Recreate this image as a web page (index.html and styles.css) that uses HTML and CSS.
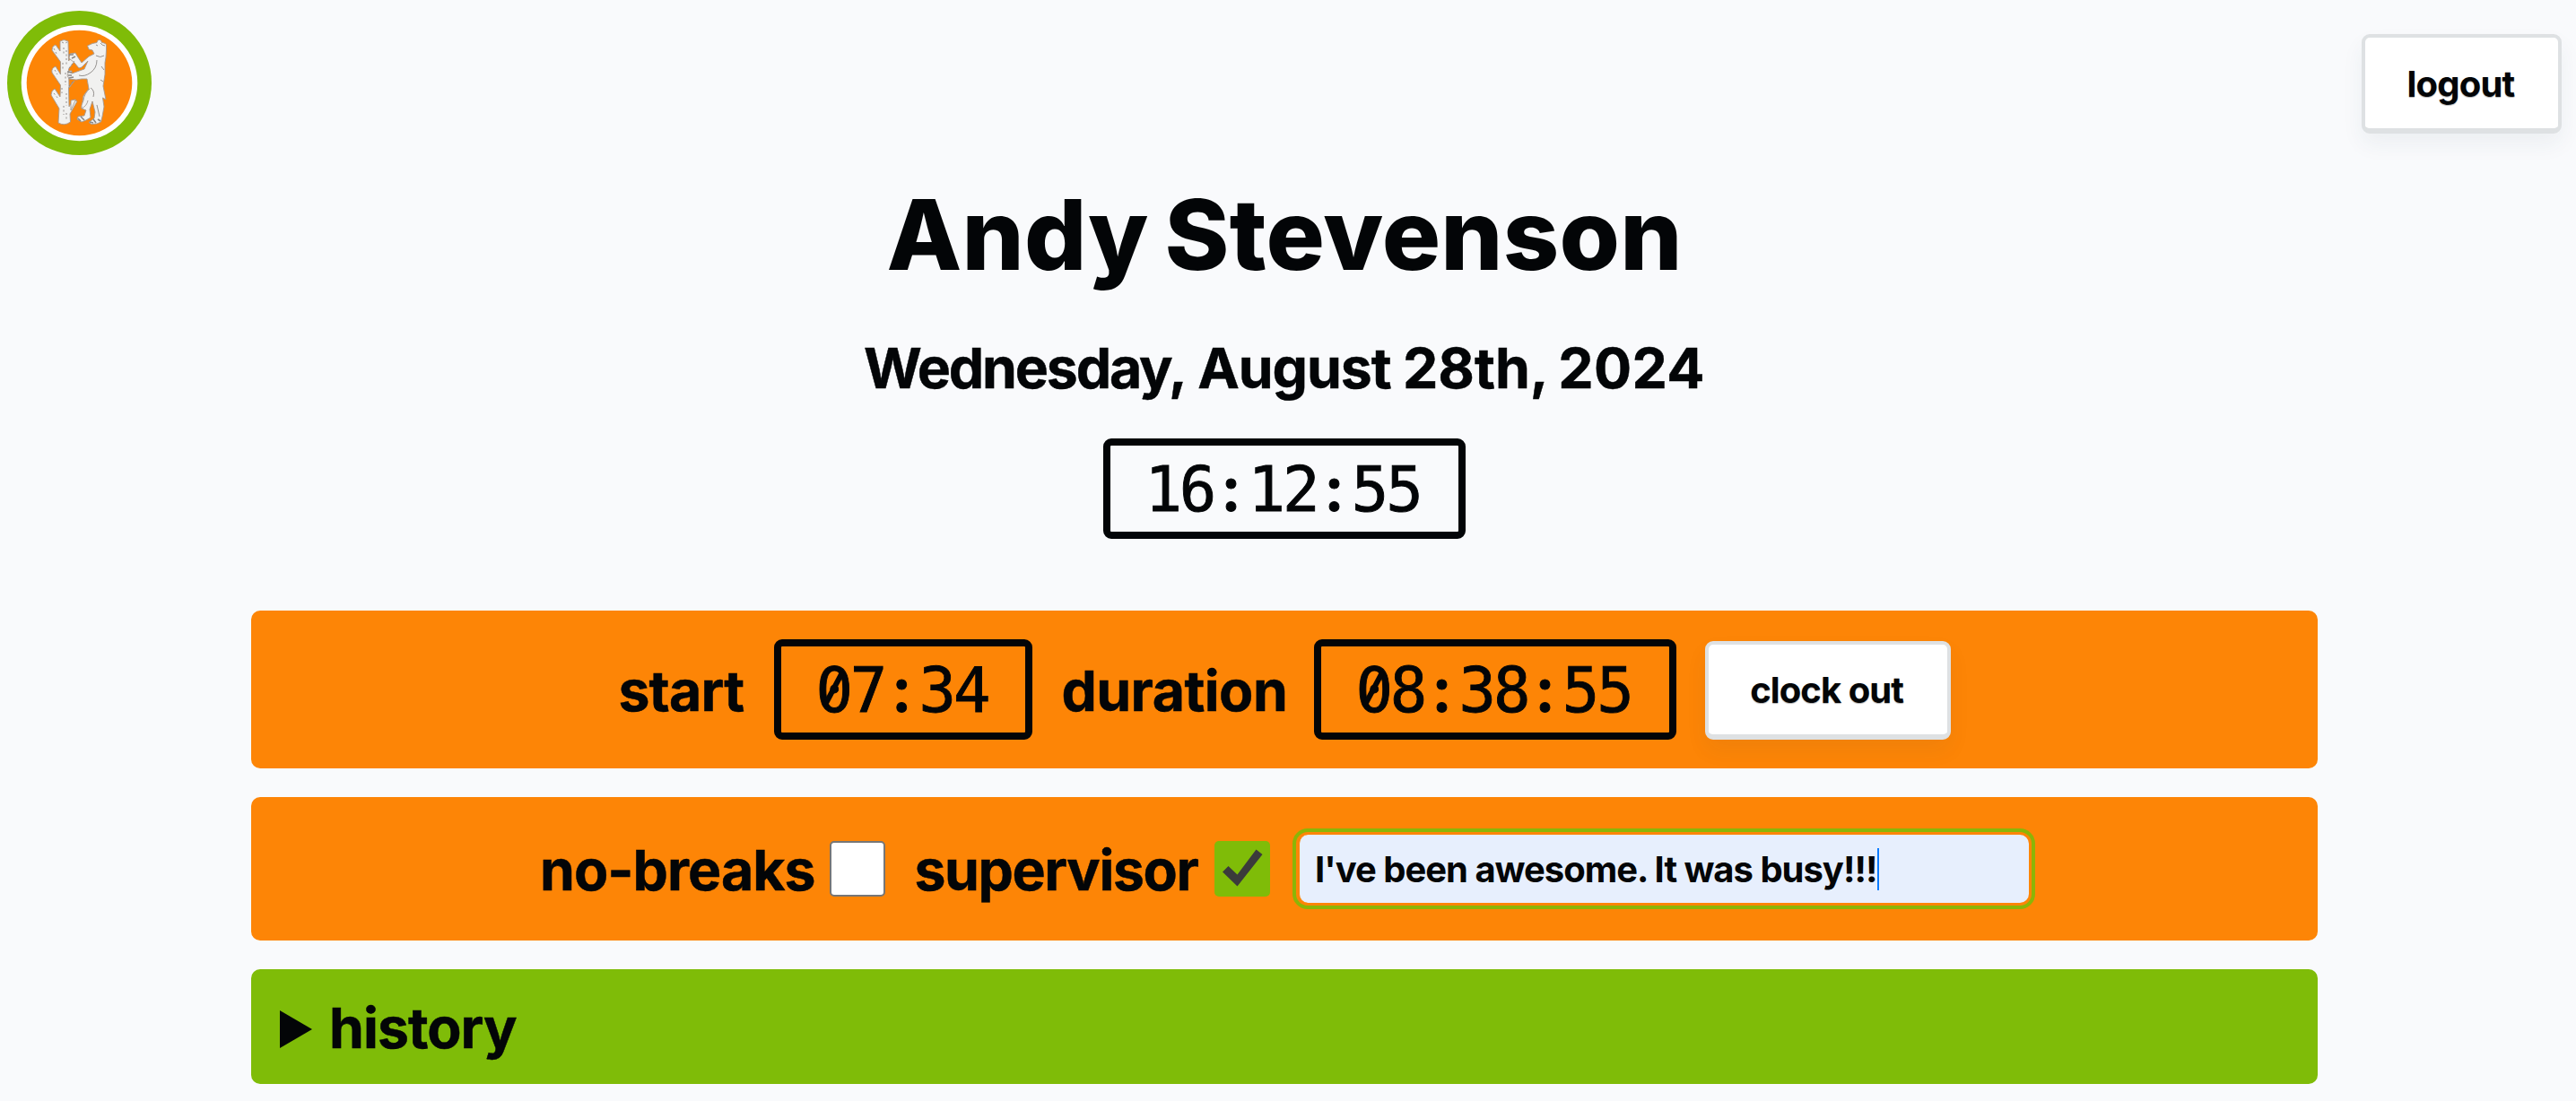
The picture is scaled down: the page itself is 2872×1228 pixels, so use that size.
FILE: index.html
```html
<!DOCTYPE html>
<html lang="en">
<head>
<meta charset="utf-8">
<title>Time clock</title>
<link rel="stylesheet" href="styles.css">
</head>
<body>
<header class="topbar">
  <svg class="logo" viewBox="8 12 161 161" aria-hidden="true">
    <circle cx="88.5" cy="92.5" r="80.5" fill="#7fbc08"/>
    <circle cx="88.5" cy="92.5" r="64.8" fill="#fff"/>
    <circle cx="88.5" cy="92.5" r="58.8" fill="#fd8506"/>
    <g fill="#f1f1f0" stroke="#a59a92" stroke-width=".9" stroke-linejoin="round">
      <path d="M67 46Q71 43 76 46L76.500 68L80 64L84 67L76.500 77L77 98L83 90L76.500 98L77 119L82 111L86 113L78 127L78.500 136Q72 141 65 137L66 121L57 106Q57 101 61 99L67 108L67.500 95L58 81Q57 76 62 74L67.500 83L67.500 69L58 56Q58 51 62 50L67 57Z"/>
      <path d="M97.500 51L103 48.500L108 47.500Q109 43 112.500 45L113.500 47.500Q119 48 118.500 51L118.500 56L118 64L117 70L117 83L115 96L118 111L114.500 109L116 119L114 130L112.500 136L108 138L102 138.500L99 136.500L105 132L106 125L103 113L100 122L101 131L96 134L91 136L86 133L87 130L94 129L96 123L91 121L93 107L99 99L97 88L91 88L85 89L77 88L75 84L77 79L80 79L80 82L94 77L98 68L91 75L88 76L83 70L77 65L78 60L84 59L87 64L91 70L99 63L105 60L103 56L99 55Z"/>
      <path d="M79 112L84.500 111L79 123ZM100 99Q94 104 93 112Q90 118 91 121Q97 118 98 112" />
    </g>
    <g fill="none" stroke="#8a8785" stroke-width=".9">
      <path d="M69 47Q72 49 75 47M71 53V61M74 56V72M70 70V79M73 81V95M69 98V104M74 104V118M71 118V128M74 126V134M60 54L63 60M61 78L64 83M60 104L65 110M77 76L83 68M77 96L81 91" stroke-dasharray="2 2.500"/>
      <path d="M77 61L82 61M80 65L84 63M75 80L80 81M76 84L80 84M77 87L82 86M87 132L90 135M90 130L94 134M100 136L104 137M104 133L107 137M109 133L112 135" stroke-width="1.600"/>
      <path d="M107 50L109 51M112 48Q114 51 117 51M107 62Q112 65 116 62M108 67Q108 76 101 81Q94 86 88 84M101 98Q106 101 104 108M108 117L111 130M113 74L116 78M112 89L115 91"/>
    </g>
  </svg>
  <button class="btn logout">logout</button>
</header>
<main class="page">
  <h1 class="name">Andy Stevenson</h1>
  <h2 class="date"><span class="weekday">Wednesday,</span> <span class="month">August</span> <span class="digits">28th,</span> <span class="digits">2024</span></h2>
  <time class="clock now">16<i class="sep">:</i>12<i class="sep">:</i>55</time>
  <section class="panel shift">
    <span class="label start">start</span>
    <time class="clock"><i class="zero">0</i>7<i class="sep">:</i>34</time>
    <span class="label duration">duration</span>
    <time class="clock"><i class="zero">0</i>8<i class="sep">:</i>38<i class="sep">:</i>55</time>
    <button class="btn clock-out">clock out</button>
  </section>
  <section class="panel options">
    <div class="option"><span class="label no-breaks">no-breaks</span><span class="check"></span></div>
    <div class="option"><span class="label supervisor">supervisor</span><span class="check checked"><svg viewBox="0 0 62 62"><path d="M9 34.500L15.500 28L25.500 37.500L46.500 9.500L53.500 15L25.500 50.500Z" fill="#3b3b3b"/></svg></span></div>
    <div class="note"><span class="note-text">I've been awesome. It was busy!!!</span><span class="caret"></span></div>
  </section>
  <section class="panel history">
    <span class="marker"></span><span class="label history-label">history</span>
  </section>
</main>
</body>
</html>
```
FILE: styles.css
```css
* { box-sizing: border-box; }
body {
  margin: 0;
  background: #f9fafc;
  color: #030507;
  font-family: Inter, "Liberation Sans", sans-serif;
  font-weight: 700;
}
.topbar {
  display: flex;
  justify-content: space-between;
  align-items: flex-start;
  height: 201px;
  padding: 12px 16px 0 8px;
}
.logo { width: 161px; height: 161px; }
.btn {
  border: 4px solid #dee1e3;
  border-bottom-width: 6px;
  border-radius: 9px;
  padding: 1px 2px 0 0;
  background: #fff;
  color: #030507;
  font: 700 40px Inter, "Liberation Sans", sans-serif;
  text-align: center;
  white-space: nowrap;
  text-shadow: 0 1px 1px rgba(0, 0, 0, .3);
  box-shadow: 0 12px 24px rgba(40, 60, 80, .06);
}
.logout { width: 223px; height: 111px; margin-top: 26px; letter-spacing: -.82px; }
.page {
  display: flex;
  flex-direction: column;
  align-items: center;
  width: 2304px;
  margin-left: 280px;
}
.name {
  margin: 0;
  font-size: 109px;
  font-weight: 800;
  line-height: 120px;
  letter-spacing: .2px;
  word-spacing: -6px;
}
.date {
  margin: 49px 0 39px;
  font-size: 62.5px;
  line-height: 80px;
  letter-spacing: -1.38px;
  -webkit-text-stroke: .5px #030507;
}
.weekday { letter-spacing: -2.15px; }
.month { letter-spacing: -1.1px; }
.digits { letter-spacing: 0; }
.date .digits:last-child { letter-spacing: .4px; margin-left: -3px; }
.clock {
  display: flex;
  align-items: center;
  height: 112px;
  padding: 2px 42px 0 38px;
  border: 8px solid #030507;
  border-radius: 9px;
  font: 400 69px/92px "DejaVu Sans Mono", monospace;
  letter-spacing: -3.14px;
  -webkit-text-stroke: .9px #030507;
}
.clock i { font-style: normal; }
.sep {
  width: 38.4px;
  margin-top: -8px;
  font: 700 72px/92px Lato, sans-serif;
  letter-spacing: 0;
  text-align: center;
}
.zero { position: relative; }
.zero::after {
  content: "";
  position: absolute;
  left: 17px;
  top: 24px;
  width: 6px;
  height: 42px;
  background: #030507;
  transform: rotate(28deg);
}
.panel {
  display: flex;
  align-items: center;
  justify-content: center;
  width: 100%;
  margin-bottom: 32px;
  border-radius: 10px;
  background: #fd8506;
}
.shift { height: 176px; margin-top: 80px; gap: 32px; }
.options { height: 160px; gap: 32px; }
.history { height: 128px; margin-bottom: 0; padding-left: 32px; justify-content: flex-start; background: #7fbc08; }
.label {
  padding: 2px 2px 0 0;
  font-size: 62.5px;
  line-height: 80px;
  text-align: center;
  white-space: nowrap;
  -webkit-text-stroke: .5px #030507;
}
.start { width: 142px; letter-spacing: -.79px; }
.duration { width: 250px; letter-spacing: -.55px; }
.no-breaks { width: 307px; letter-spacing: -.96px; }
.supervisor { width: 319px; letter-spacing: -1.41px; }
.clock-out { width: 274px; height: 110px; margin-top: 2px; letter-spacing: -.94px; }
.option { display: flex; align-items: center; gap: 16px; }
.check {
  width: 62px;
  height: 62px;
  border: 2px solid #767676;
  border-radius: 5px;
  background: #fff;
}
.checked { border: 0; background: #7fbc08; }
.checked svg { display: block; }
.note {
  display: flex;
  align-items: center;
  width: 814px;
  height: 76px;
  padding-left: 17px;
  border: 1px solid #fd8506;
  border-width: 0 0 0 1px;
  border-radius: 10px;
  background: #e7effd;
  outline: 4px solid #8bb507;
  outline-offset: 3px;
}
.note-text { font-size: 40px; letter-spacing: -1.02px; white-space: nowrap; }
.caret { width: 2px; height: 47px; margin-left: 1px; background: #0a7cff; }
.marker {
  width: 36px;
  height: 42px;
  margin: 6px 19px 0 0;
  background: #030507;
  clip-path: polygon(0 0, 100% 50%, 0 100%);
}
.history-label { letter-spacing: -.98px; }
```
